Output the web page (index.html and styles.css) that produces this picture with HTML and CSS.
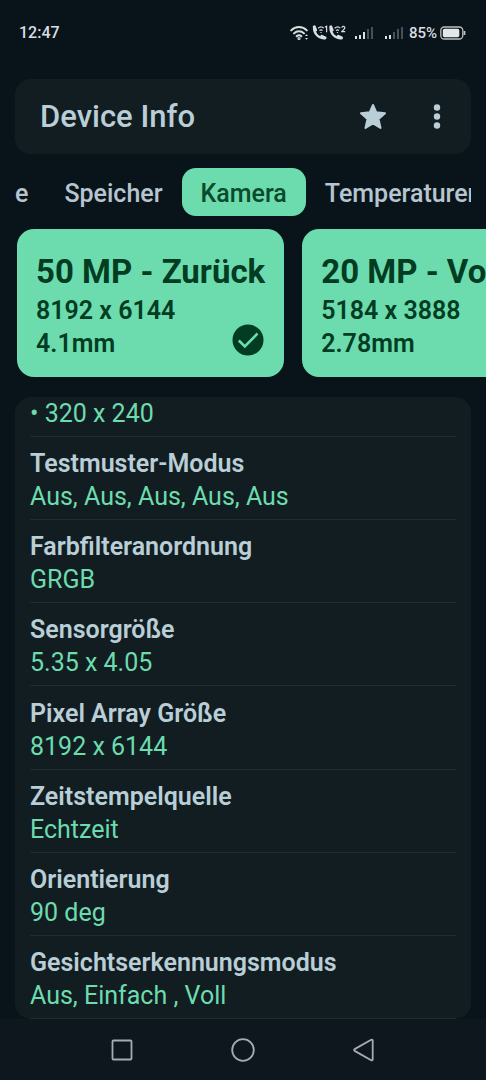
FILE: index.html
```html
<!DOCTYPE html>
<html lang="de">
<head>
<meta charset="utf-8">
<meta name="viewport" content="width=device-width, initial-scale=1">
<title>Device Info</title>
<link rel="stylesheet" href="styles.css">
</head>
<body>
<div class="screen">
  <div class="status">
    <span class="clock">12:47</span>
    <div class="status-icons">
      <svg width="19" height="16" viewBox="0 0 19 16" fill="none" stroke="#d9dee0" stroke-width="2" stroke-linecap="round">
        <path d="M1.2 5.4C5.5 1 12.5 1 16.8 5.4M4 8.4c2.800-2.800 7.200-2.800 10 0M6.700 11.200c1.300-1.300 3.300-1.300 4.600 0"/>
        <circle cx="9" cy="13.500" r=".6"/>
        <path d="M15 11l1.500-1.800L18 11zM15 13l1.500 1.800L18 13z" fill="#d9dee0" stroke="none"/>
      </svg>
      <svg class="calls" width="34" height="16" viewBox="0 0 34 16" fill="none" stroke="#d9dee0">
        <path d="M2 2.500c-.3 6 4.500 11 11 10.800" stroke-width="2.200"/>
        <path d="M2.300 1.800l1.300 3.300M9.800 11.400l3.200 1.400" stroke-width="3" stroke-linecap="round"/>
        <path d="M6.200 3.200c1.700-1.600 4-1.600 5.600 0M7.500 5.500c1-.8 2-.8 3 0M9 7v1" stroke-width="1.200"/>
        <path d="M18.500 2.500c-.3 6 4.500 11 11 10.800" stroke-width="2.200"/>
        <path d="M18.800 1.800l1.300 3.300M26.300 11.400l3.200 1.400" stroke-width="3" stroke-linecap="round"/>
        <path d="M22.700 3.200c1.700-1.600 4-1.600 5.600 0M24 5.500c1-.8 2-.8 3 0M25.500 7v1" stroke-width="1.200"/>
        <path d="M12.800 2.200L14.600 1.300V7.200M29.800 2.700c.4-2 3.200-1.700 3 .2-.1 1.300-1.800 2-3 3.700h3.400" stroke-width="1.200"/>
      </svg>
      <svg class="signal" width="19" height="14" viewBox="0 0 19 14" fill="#d9dee0">
        <path d="M0 10h2v3H0zM4 9h2v4H4zM8 6h2v7H8z"/><path opacity=".3" d="M12 3h2v10h-2zM16 1h2v12h-2z"/>
      </svg>
      <svg class="signal" width="19" height="14" viewBox="0 0 19 14" fill="#d9dee0">
        <path d="M0 10h2v3H0zM4 9h2v4H4z"/><path opacity=".3" d="M8 6h2v7H8zM12 3h2v10h-2zM16 1h2v12h-2z"/>
      </svg>
      <span class="percent">85%</span>
      <svg width="26" height="14" viewBox="0 0 26 14">
        <rect x=".8" y="1" width="22" height="12" rx="3.500" fill="none" stroke="#b9c0c2" stroke-width="1.300"/>
        <rect x="2.800" y="2.800" width="16.500" height="8.400" rx="1.800" fill="#e3e7e8"/>
        <path d="M24.500 5v4" stroke="#b9c0c2" stroke-width="1.800"/>
      </svg>
    </div>
  </div>

  <header class="appbar">
    <h1 class="title">Device Info</h1>
    <button class="icon-button" aria-label="Favorit">
      <svg width="28" height="28" viewBox="0 0 28 28" fill="#b9ced6" stroke="#b9ced6" stroke-width="2" stroke-linejoin="round">
        <path d="M14 2l3.300 7.300 8.700.9-6.500 5.700 2 9-7.500-4.500-7.500 4.500 2-9L2 10.200l8.700-.9z"/>
      </svg>
    </button>
    <button class="icon-button" aria-label="Menü">
      <svg width="28" height="28" viewBox="0 0 28 28" fill="#b9ced6">
        <circle cx="14" cy="4.500" r="3.200"/><circle cx="14" cy="13.500" r="3.200"/><circle cx="14" cy="22.500" r="3.200"/>
      </svg>
    </button>
  </header>

  <nav class="tabs">
    <button class="tab tab-first">e</button>
    <button class="tab">Speicher</button>
    <button class="tab tab-active">Kamera</button>
    <button class="tab">Temperaturen</button>
  </nav>

  <div class="cameras">
    <button class="camera">
      <span class="camera-name">50 MP - Zurück</span>
      <span class="camera-line">8192 x 6144</span>
      <span class="camera-line">4.1mm</span>
      <svg class="check" width="32" height="32" viewBox="0 0 32 32">
        <circle cx="16" cy="16" r="15.500" fill="#023c22"/>
        <path d="M6.800 16.500l6 6L25.500 9.500" fill="none" stroke="#6cdcae" stroke-width="2.600"/>
      </svg>
    </button>
    <button class="camera">
      <span class="camera-name">20 MP - Vorne</span>
      <span class="camera-line">5184 x 3888</span>
      <span class="camera-line">2.78mm</span>
    </button>
  </div>

  <main class="panel">
    <dl class="list">
      <div class="row row-cut"><dd class="value">• 320 x 240</dd></div>
      <div class="row"><dt class="label">Testmuster-Modus</dt><dd class="value">Aus, Aus, Aus, Aus, Aus</dd></div>
      <div class="row"><dt class="label">Farbfilteranordnung</dt><dd class="value">GRGB</dd></div>
      <div class="row"><dt class="label">Sensorgröße</dt><dd class="value">5.35 x 4.05</dd></div>
      <div class="row"><dt class="label">Pixel Array Größe</dt><dd class="value">8192 x 6144</dd></div>
      <div class="row"><dt class="label">Zeitstempelquelle</dt><dd class="value">Echtzeit</dd></div>
      <div class="row"><dt class="label">Orientierung</dt><dd class="value">90 deg</dd></div>
      <div class="row"><dt class="label">Gesichtserkennungsmodus</dt><dd class="value">Aus, Einfach , Voll</dd></div>
    </dl>
  </main>

  <nav class="sysnav">
    <button class="sys" aria-label="Übersicht">
      <svg width="24" height="24" viewBox="0 0 24 24" fill="none" stroke="#a7abb1" stroke-width="1.800"><rect x="2.500" y="2.500" width="19" height="19" rx="1"/></svg>
    </button>
    <button class="sys" aria-label="Start">
      <svg width="24" height="24" viewBox="0 0 24 24" fill="none" stroke="#a7abb1" stroke-width="1.800"><circle cx="12" cy="12" r="10.800"/></svg>
    </button>
    <button class="sys" aria-label="Zurück">
      <svg width="24" height="24" viewBox="0 0 24 24" fill="none" stroke="#a7abb1" stroke-width="1.800" stroke-linejoin="round"><path d="M2.600 11.100L19.200 1.800q1.500-.6 1.500 1v18.400q0 1.600-1.500 1L2.600 12.900q-1.200-.9 0-1.800z"/></svg>
    </button>
  </nav>
</div>
</body>
</html>
```
FILE: styles.css
```css
* { box-sizing: border-box; }

body {
  margin: 0;
  background: #09141a;
  font-family: Roboto, sans-serif;
  color: #b9ced6;
}

button {
  margin: 0;
  padding: 0;
  border: 0;
  background: none;
  color: inherit;
  font: inherit;
}

svg { display: block; flex: none; }

.screen {
  display: flex;
  flex-direction: column;
  min-height: 100vh;
  overflow: hidden;
}

.status {
  display: flex;
  align-items: center;
  justify-content: space-between;
  height: 65px;
  padding: 0 20px 0 19px;
  color: #d9dee0;
  font-size: 16px;
  font-weight: 500;
}

.status-icons { display: flex; align-items: center; gap: 3px; }
.calls { margin-right: 6px; }
.signal { margin-right: 8px; }
.signal + .percent { margin-left: -6px; }
.percent { font-size: 15px; }

.appbar {
  display: flex;
  align-items: center;
  gap: 36px;
  height: 75px;
  margin: 14px 15px 0;
  padding: 0 20px 0 25px;
  border-radius: 16px;
  background: #121d22;
}

.title {
  flex: 1;
  margin: 0;
  font-size: 31px;
  font-weight: 500;
}

.tabs {
  display: flex;
  height: 48px;
  margin: 14px 15px 0;
  overflow: hidden;
}

.tab {
  flex: none;
  padding: 3px 19px 0;
  border-radius: 14px;
  font-size: 25px;
  font-weight: 500;
  color: #b7c5d0;
}

.tab-first { padding-right: 17px; padding-left: 0; }

.tab-active { background: #6cdcae; color: #0a4a2d; }

.cameras {
  display: flex;
  gap: 18px;
  margin-top: 13px;
  padding-left: 17px;
}

.camera {
  position: relative;
  display: flex;
  flex: none;
  flex-direction: column;
  align-items: flex-start;
  padding: 21px 19px 17px;
  border-radius: 17px;
  background: #6cdcae;
  color: #023c22;
}

.camera-name { font-size: 33px; font-weight: 700; line-height: 44px; }
.camera-line { font-size: 25px; font-weight: 600; line-height: 33px; }

.check { position: absolute; right: 20px; bottom: 21px; }

.panel {
  display: flex;
  flex: 1;
  margin: 20px 15px 0;
  padding: 0 15px;
  border-radius: 16px;
  background: #121d22;
  overflow: hidden;
}

.list {
  display: flex;
  flex: 1;
  flex-direction: column;
  margin: 0;
}

.row {
  display: flex;
  flex: 1;
  flex-direction: column;
  justify-content: flex-end;
  padding-bottom: 6px;
  border-bottom: 1px solid #1f2c31;
}

.row-cut { flex: 0 0 38px; }

.label { font-size: 25px; font-weight: 600; line-height: 33px; }

.value {
  margin: 0;
  font-size: 25px;
  line-height: 33px;
  color: #6cdcae;
}

.sysnav {
  display: flex;
  align-items: center;
  justify-content: center;
  gap: 97px;
  height: 61px;
  background: #0f171e;
}
```
